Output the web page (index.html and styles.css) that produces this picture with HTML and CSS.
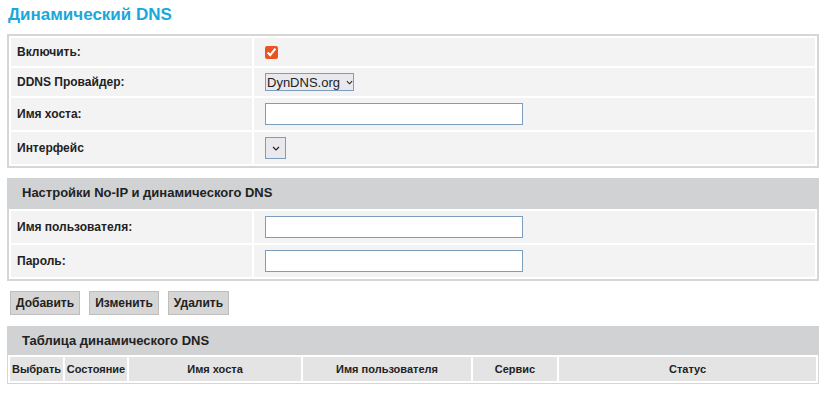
FILE: index.html
```html
<!DOCTYPE html>
<html lang="ru">
<head>
    <meta charset="UTF-8">
    <meta name="viewport" content="width=device-width, initial-scale=1.0">
    <title>Динамический DNS</title>
    <link rel="stylesheet" href="styles.css">
</head>
<body>
    <h1 class="page-title">Динамический DNS</h1>

    <table class="form-table">
        <tr class="row-short">
            <td class="label">Включить:</td>
            <td class="value"><input type="checkbox" id="enable" checked></td>
        </tr>
        <tr class="row-short">
            <td class="label">DDNS Провайдер:</td>
            <td class="value">
                <span class="select select-provider">DynDNS.org
                    <svg class="chev" width="8" height="5" viewBox="0 0 8 5"><path d="M1 1l3 3 3-3" fill="none" stroke="#222" stroke-width="1.2"/></svg>
                </span>
            </td>
        </tr>
        <tr>
            <td class="label">Имя хоста:</td>
            <td class="value"><input type="text" class="text-input" id="host"></td>
        </tr>
        <tr>
            <td class="label">Интерфейс</td>
            <td class="value">
                <span class="select select-empty">
                    <svg class="chev" width="8" height="5" viewBox="0 0 8 5"><path d="M1 1l3 3 3-3" fill="none" stroke="#222" stroke-width="1.2"/></svg>
                </span>
            </td>
        </tr>
    </table>

    <div class="section-head">Настройки No-IP и динамического DNS</div>
    <table class="form-table attached">
        <tr>
            <td class="label">Имя пользователя:</td>
            <td class="value"><input type="text" class="text-input" id="user"></td>
        </tr>
        <tr>
            <td class="label">Пароль:</td>
            <td class="value"><input type="password" class="text-input" id="pass"></td>
        </tr>
    </table>

    <div class="actions">
        <button class="btn">Добавить</button>
        <button class="btn">Изменить</button>
        <button class="btn">Удалить</button>
    </div>

    <div class="section-head">Таблица динамического DNS</div>
    <table class="list-table">
        <tr>
            <th class="col-select">Выбрать</th>
            <th class="col-state">Состояние</th>
            <th class="col-host">Имя хоста</th>
            <th class="col-user">Имя пользователя</th>
            <th class="col-service">Сервис</th>
            <th>Статус</th>
        </tr>
    </table>
</body>
</html>
```

FILE: styles.css
```css
body {
    margin: 0 7px;
    font-family: "Liberation Sans", Arial, sans-serif;
    color: #222;
    background: #fff;
}
.page-title {
    margin: 0;
    padding: 4px 1px 0;
    height: 34px;
    box-sizing: border-box;
    font-size: 17px;
    line-height: 22px;
    color: #1aa7dc;
}
.form-table {
    width: 100%;
    border: 2px solid #d6d6d6;
    border-spacing: 2px;
    box-sizing: border-box;
}
.form-table.attached {
    border-top-color: #d1d2d4;
}
.form-table td {
    background: #f3f3f3;
    height: 32px;
    padding: 0;
    box-sizing: border-box;
}
.form-table .row-short td {
    height: 28px;
}
.form-table .label {
    width: 241px;
    padding-left: 6px;
    font-size: 12px;
    font-weight: bold;
}
.form-table .value {
    padding-left: 11px;
    vertical-align: middle;
}
input[type="checkbox"] {
    margin: 0;
    width: 13px;
    height: 13px;
    vertical-align: middle;
    accent-color: #e95420;
}
.text-input {
    display: block;
    width: 258px;
    height: 22px;
    margin: 0;
    box-sizing: border-box;
    border: 1px solid #7d9dbc;
    background: #fff;
    border-radius: 0;
}
.select {
    display: inline-flex;
    align-items: center;
    box-sizing: border-box;
    border: 1px solid #7d9dbc;
    background: #e9e9ed;
    font-size: 13px;
    vertical-align: middle;
}
.select-provider {
    width: 89px;
    height: 18px;
    padding-left: 1px;
    gap: 6px;
}
.select-empty {
    width: 21px;
    height: 22px;
    justify-content: center;
}
.section-head {
    margin-top: 10px;
    height: 29px;
    padding-left: 15px;
    background: #d1d2d4;
    font-size: 13px;
    font-weight: bold;
    line-height: 29px;
}
.actions {
    display: flex;
    gap: 9px;
    margin: 10px 0 0 3px;
}
.btn {
    height: 24px;
    padding: 0 5px;
    border: 1px solid #bdbdbd;
    background: #d6d6d6;
    font-family: inherit;
    font-size: 12px;
    font-weight: bold;
    color: #222;
}
.actions + .section-head {
    margin-top: 11px;
}
.list-table {
    width: 100%;
    table-layout: fixed;
    border: 1px solid #d6d6d6;
    border-top: 0;
    border-spacing: 2px;
    box-sizing: border-box;
}
.list-table th {
    height: 24px;
    padding: 0;
    background: #e4e4e4;
    font-size: 11px;
    font-weight: bold;
    text-align: center;
}
.col-select { width: 53px; }
.col-state { width: 62px; }
.col-host { width: 172px; }
.col-user { width: 168px; }
.col-service { width: 84px; }
```
